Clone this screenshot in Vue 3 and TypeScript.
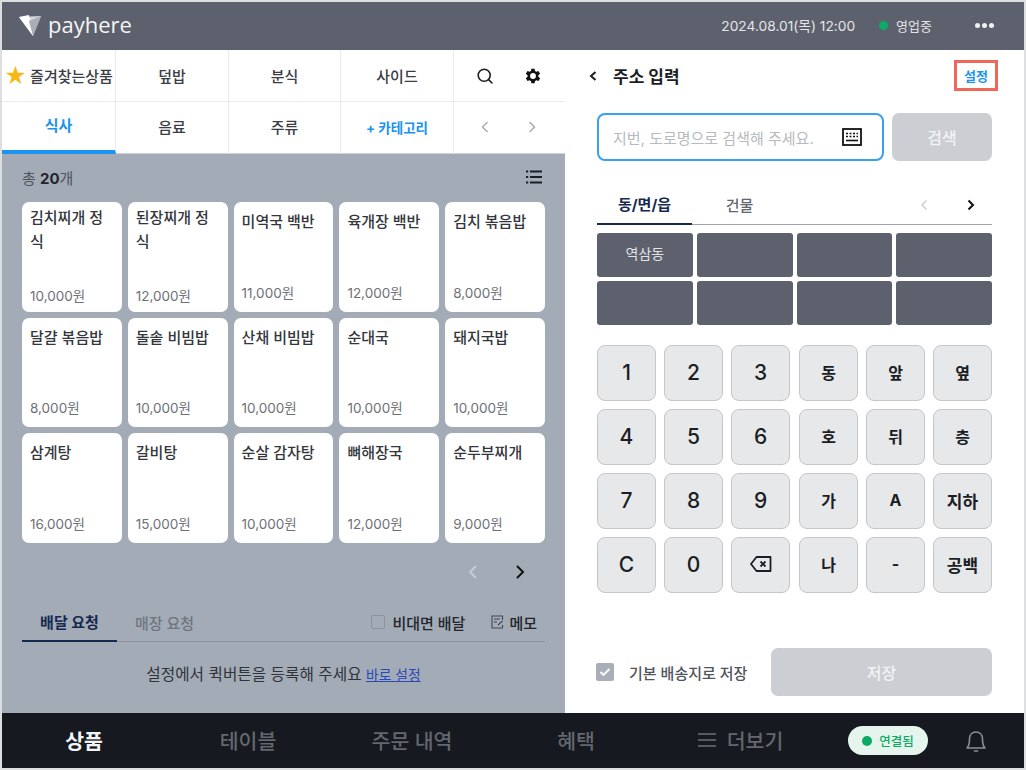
<template>
  <div class="frame">
    <header class="topbar">
      <div class="logo">
        <svg width="24" height="24" viewBox="0 0 24 24">
          <path d="M1 4 L23 3 L15 23 Z" fill="#d5d8dc" />
          <path d="M1 4 L11 2 L15 23 Z" fill="#ffffff" />
          <path d="M11 8 L23 3 L15 23 Z" fill="#a9adb4" />
        </svg>
        <span>payhere</span>
      </div>
      <div class="top-right">
        <span class="datetime">2024.08.01(목) 12:00</span>
        <span class="status"><i class="dot"></i>영업중</span>
        <span class="more"><i></i><i></i><i></i></span>
      </div>
    </header>

    <main class="body">
      <section class="left">
        <div class="cats">
          <div class="cat"><span class="star">★</span><span class="fav">즐겨찾는상품</span></div>
          <div class="cat">덮밥</div>
          <div class="cat">분식</div>
          <div class="cat">사이드</div>
          <div class="cat tools">
            <svg width="18" height="18" viewBox="0 0 18 18" fill="none" stroke="#1b1e24" stroke-width="1.6">
              <circle cx="8.2" cy="8.2" r="6" />
              <path d="M12.6 12.6 L16 16" stroke-linecap="round" />
            </svg>
            <svg width="20" height="20" viewBox="0 0 24 24" fill="#111">
              <path d="M19.4 13a7.5 7.5 0 0 0 0-2l2.1-1.6-2-3.5-2.5 1a7.6 7.6 0 0 0-1.7-1L15 3.2h-4l-.4 2.7a7.6 7.6 0 0 0-1.7 1l-2.500-1-2 3.500L6.500 11a7.500 7.500 0 0 0 0 2l-2.100 1.600 2 3.500 2.500-1a7.600 7.600 0 0 0 1.700 1l.4 2.700h4l.4-2.700a7.600 7.600 0 0 0 1.700-1l2.500 1 2-3.500zM13 15.500a3.500 3.500 0 1 1 0-7 3.500 3.500 0 0 1 0 7z" transform="translate(-1 0)" />
            </svg>
          </div>
          <div class="cat active">식사</div>
          <div class="cat">음료</div>
          <div class="cat">주류</div>
          <div class="cat add">+ 카테고리</div>
          <div class="cat tools arrows">
            <svg class="chev" width="10" height="14" viewBox="0 0 10 14" fill="none" stroke="#a9adb4" stroke-width="1.5"><path d="M7.500 2 L2.500 7 L7.500 12" /></svg>
            <svg class="chev" width="10" height="14" viewBox="0 0 10 14" fill="none" stroke="#a9adb4" stroke-width="1.5"><path d="M2.500 2 L7.500 7 L2.500 12" /></svg>
          </div>
        </div>

        <div class="products">
          <div class="total-row">
            <span class="total">총 <b>20</b>개</span>
            <svg width="16" height="14" viewBox="0 0 16 14" fill="#1b1e24">
              <rect x="0" y="0.500" width="2.200" height="2" /><rect x="4" y="0.500" width="12" height="2" />
              <rect x="0" y="6" width="2.200" height="2" /><rect x="4" y="6" width="12" height="2" />
              <rect x="0" y="11.500" width="2.200" height="2" /><rect x="4" y="11.500" width="12" height="2" />
            </svg>
          </div>
          <div class="cards">
            <div v-for="p in products" :key="p.name" class="card" :class="{ long: p.name.length > 6 }">
              <div class="name">{{ p.name }}</div>
              <div class="price">{{ p.price }}</div>
            </div>
          </div>
          <div class="pager">
            <svg width="12" height="18" viewBox="0 0 12 18" fill="none" stroke="#c6cbd2" stroke-width="2"><path d="M9 3 L3 9 L9 15" /></svg>
            <svg width="12" height="18" viewBox="0 0 12 18" fill="none" stroke="#111" stroke-width="2"><path d="M3 3 L9 9 L3 15" /></svg>
          </div>
          <div class="req-tabs">
            <span class="req-tab on">배달 요청</span>
            <span class="req-tab">매장 요청</span>
            <span class="req-right">
              <span class="opt"><i class="box"></i>비대면 배달</span>
              <span class="opt memo">
                <svg width="13" height="14" viewBox="0 0 13 14" fill="none" stroke="#444a55" stroke-width="1.100">
                  <path d="M11.500 5 V1 H1 V13 H11.500 V10" />
                  <path d="M3 4 H9 M3 7 H6" />
                  <path d="M7 10 L11.500 6" />
                </svg>
                메모
              </span>
            </span>
          </div>
          <div class="quick">설정에서 퀵버튼을 등록해 주세요 <a>바로 설정</a></div>
        </div>
      </section>

      <section class="right">
        <div class="addr-head">
          <div class="addr-title">
            <svg width="10" height="12" viewBox="0 0 10 12" fill="none" stroke="#1b1e24" stroke-width="2"><path d="M7.500 2 L3 6 L7.500 10" /></svg>
            <span>주소 입력</span>
          </div>
          <span class="setting">설정</span>
        </div>

        <div class="search-row">
          <div class="search-box">
            <span>지번, 도로명으로 검색해 주세요.</span>
            <svg width="20" height="18" viewBox="0 0 20 18" fill="none">
              <rect x="1" y="1" width="18" height="16" stroke="#111" stroke-width="1.800" />
              <path d="M4 5.500 H6 M7.500 5.500 H9.500 M11 5.500 H13 M14.500 5.500 H16 M4 8.500 H6 M7.500 8.500 H9.500 M11 8.500 H13 M14.500 8.500 H16" stroke="#111" stroke-width="1.600" />
              <path d="M4 12.500 H16" stroke="#111" stroke-width="1.600" />
            </svg>
          </div>
          <button class="btn-off search-btn">검색</button>
        </div>

        <div class="dong-tabs">
          <span class="dong-tab on">동/면/읍</span>
          <span class="dong-tab">건물</span>
          <span class="dong-nav">
            <svg width="10" height="12" viewBox="0 0 10 12" fill="none" stroke="#ccd0d5" stroke-width="1.500"><path d="M7.500 1.500 L3 6 L7.500 10.500" /></svg>
            <svg width="10" height="12" viewBox="0 0 10 12" fill="none" stroke="#111" stroke-width="2"><path d="M2.500 1.500 L7 6 L2.500 10.500" /></svg>
          </span>
        </div>

        <div class="dong-grid">
          <div v-for="(d, i) in dongs" :key="i" class="dong-cell">{{ d }}</div>
        </div>

        <div class="keypad">
          <div v-for="k in keys" :key="k.id" class="key" :class="{ ko: k.ko, text: k.label.length > 1 && k.id !== 'back' }">
            <svg v-if="k.id === 'back'" width="24" height="18" viewBox="0 0 24 18" fill="none" stroke="#1b1e24" stroke-width="1.800" stroke-linejoin="round">
              <path d="M7.500 2 H21.500 V16 H7.500 L2 9 Z" />
              <path d="M11.500 6.500 L16.500 11.500 M16.500 6.500 L11.500 11.500" />
            </svg>
            <template v-else>{{ k.label }}</template>
          </div>
        </div>

        <div class="save-row">
          <label class="save-check">
            <i class="checked">
              <svg width="12" height="10" viewBox="0 0 12 10" fill="none" stroke="#fff" stroke-width="1.800"><path d="M1.500 5 L4.500 8 L10.500 2" /></svg>
            </i>
            기본 배송지로 저장
          </label>
          <button class="btn-off save-btn">저장</button>
        </div>
      </section>
    </main>

    <nav class="bottom">
      <span class="nav-item on">상품</span>
      <span class="nav-item">테이블</span>
      <span class="nav-item">주문 내역</span>
      <span class="nav-item">혜택</span>
      <span class="nav-item more-item">
        <svg width="20" height="16" viewBox="0 0 20 16" fill="none" stroke="#6c7078" stroke-width="1.700"><path d="M1 2 H19 M1 8 H19 M1 14 H19" /></svg>
        더보기
      </span>
      <span class="conn"><i></i>연결됨</span>
      <svg class="bell" width="22" height="24" viewBox="0 0 22 24" fill="none" stroke="#8b8f96" stroke-width="1.600">
        <path d="M2 19 C4 17 4.500 15 4.500 10 C4.500 5.500 7.500 3 11 3 C14.500 3 17.500 5.500 17.500 10 C17.500 15 18 17 20 19 Z" stroke-linejoin="round" />
        <path d="M9.500 22 H12.500" stroke-linecap="round" />
      </svg>
    </nav>
  </div>
</template>

<script setup lang="ts">
interface Product {
  name: string;
  price: string;
}

interface Key {
  id: string;
  label: string;
  ko?: boolean;
}

const products: Product[] = [
  { name: '김치찌개 정식', price: '10,000원' },
  { name: '된장찌개 정식', price: '12,000원' },
  { name: '미역국 백반', price: '11,000원' },
  { name: '육개장 백반', price: '12,000원' },
  { name: '김치 볶음밥', price: '8,000원' },
  { name: '달걀 볶음밥', price: '8,000원' },
  { name: '돌솥 비빔밥', price: '10,000원' },
  { name: '산채 비빔밥', price: '10,000원' },
  { name: '순대국', price: '10,000원' },
  { name: '돼지국밥', price: '10,000원' },
  { name: '삼계탕', price: '16,000원' },
  { name: '갈비탕', price: '15,000원' },
  { name: '순살 감자탕', price: '10,000원' },
  { name: '뼈해장국', price: '12,000원' },
  { name: '순두부찌개', price: '9,000원' },
];

const dongs = ['역삼동', '', '', '', '', '', '', ''];

const rows = [
  ['1', '2', '3', '동', '앞', '옆'],
  ['4', '5', '6', '호', '뒤', '층'],
  ['7', '8', '9', '가', 'A', '지하'],
  ['C', '0', 'back', '나', '-', '공백'],
];

const keys: Key[] = rows.flatMap((row) =>
  row.map((label, i) => ({
    id: label,
    label,
    ko: i >= 3,
  })),
);
</script>

<style>
html,
body {
  margin: 0;
  background: #dcdee0;
}
</style>

<style scoped>
* {
  box-sizing: border-box;
}

.frame {
  width: 1026px;
  height: 770px;
  padding: 2px;
  display: flex;
  flex-direction: column;
  background: #dcdee0;
  font-family: Inter, 'Noto Sans CJK KR', sans-serif;
  color: #22252b;
  overflow: hidden;
}

.topbar {
  height: 48px;
  flex: none;
  background: #5c616d;
  display: flex;
  align-items: center;
  justify-content: space-between;
  padding: 0 30px 2px 16px;
  color: #e4e5e8;
}

.logo {
  display: flex;
  align-items: center;
  gap: 6px;
}

.logo span {
  font-family: 'Open Sans', sans-serif;
  font-size: 22px;
  font-weight: 500;
  color: #f4f5f6;
  line-height: 1;
  margin-top: -3px;
}

.top-right {
  display: flex;
  align-items: center;
  font-size: 13.750px;
}

.datetime {
  margin-right: 24px;
}

.status {
  display: flex;
  align-items: center;
  gap: 8px;
  font-size: 13px;
  margin-right: 43px;
}

.dot {
  width: 9px;
  height: 9px;
  border-radius: 50%;
  background: #0caa64;
}

.more {
  display: flex;
  gap: 2px;
}

.more i {
  width: 5px;
  height: 5px;
  border-radius: 50%;
  background: #f0f1f2;
}

.body {
  flex: 1;
  display: flex;
  min-height: 0;
}

.left {
  width: 563px;
  flex: none;
  display: flex;
  flex-direction: column;
  background: #a3abb6;
}

.cats {
  display: grid;
  grid-template-columns: 114px 113px 112px 113px 111px;
  grid-template-rows: 52px 52px;
  background: #fff;
  flex: none;
}

.cat {
  display: flex;
  align-items: center;
  justify-content: center;
  border-right: 1px solid #eaebed;
  border-bottom: 1px solid #eaebed;
  font-size: 15px;
  font-weight: 500;
  color: #3a3d44;
  white-space: nowrap;
}

.cat:nth-child(5n) {
  border-right: 0;
}

.cat:nth-child(n + 6) {
  border-bottom-color: #cfd3d8;
  padding-bottom: 2px;
}

.star {
  color: #f8b814;
  font-size: 22px;
  line-height: 1;
  margin-right: 3px;
}

.fav {
  font-size: 15px;
}

.tools {
  gap: 29px;
}

.tools .chev {
  margin: 0 4px;
}

.arrows {
  padding-right: 2px;
}

.cat.active {
  color: #1b93f0;
  font-weight: 700;
  border-bottom: 4px solid #1b93f0;
  padding-bottom: 4px;
}

.cat.add {
  color: #1b93f0;
  font-size: 13.500px;
  font-weight: 700;
}

.products {
  flex: 1;
  display: flex;
  flex-direction: column;
  padding: 0 20px;
  min-height: 0;
}

.total-row {
  height: 48px;
  flex: none;
  display: flex;
  align-items: center;
  justify-content: space-between;
  padding: 0 3px 2px 0;
  font-size: 15px;
  color: #4f545d;
}

.total b {
  color: #22252b;
  font-weight: 700;
}

.cards {
  display: grid;
  grid-template-columns: repeat(5, 99.800px);
  grid-auto-rows: 109.700px;
  gap: 6px;
  flex: none;
}

.card {
  background: #fff;
  border-radius: 7px;
  padding: 8px 8px 10px;
  display: flex;
  flex-direction: column;
  justify-content: space-between;
}

/* two line names sit a bit higher, price drops a bit */
.card.long {
  padding: 4px 8px 7px;
}

.name {
  font-size: 15px;
  font-weight: 500;
  line-height: 24px;
  color: #33363c;
}

.price {
  font-size: 13.500px;
  line-height: 18px;
  color: #6d7178;
}

.pager {
  display: flex;
  justify-content: flex-end;
  gap: 35px;
  padding: 20px 19px 0 0;
  height: 54px;
  flex: none;
}

.req-tabs {
  display: flex;
  align-items: center;
  height: 39px;
  margin-top: 6px;
  flex: none;
  border-bottom: 1px solid #8d939d;
  font-size: 15px;
  font-weight: 500;
}

.req-tab {
  width: 95px;
  height: 39px;
  display: flex;
  align-items: center;
  justify-content: center;
  color: #6f7680;
  margin-right: -7px;
}

.req-tab.on {
  color: #16284f;
  font-weight: 700;
  border-bottom: 2px solid #16284f;
  margin-right: 0;
}

.req-right {
  margin-left: auto;
  display: flex;
  align-items: center;
  gap: 26px;
  padding-right: 8px;
  color: #22252b;
}

.opt {
  display: flex;
  align-items: center;
  gap: 7px;
}

.memo {
  gap: 5px;
}

.box {
  width: 14px;
  height: 14px;
  border: 1.500px solid #8d939d;
  border-radius: 2px;
}

.quick {
  text-align: center;
  font-size: 15.700px;
  margin-top: 20px;
  color: #30333a;
}

.quick a {
  color: #2b48b8;
  text-decoration: underline;
  font-size: 13.800px;
}

.right {
  flex: 1;
  background: #fff;
  padding: 0 32px;
  display: flex;
  flex-direction: column;
}

.addr-head {
  height: 63px;
  flex: none;
  display: flex;
  align-items: center;
  justify-content: space-between;
  padding-bottom: 12px;
  margin-right: -6px;
}

.addr-title {
  display: flex;
  align-items: center;
  gap: 15px;
  margin-left: -9px;
  font-size: 17px;
  font-weight: 700;
  color: #1b1e24;
}

.setting {
  width: 44px;
  height: 31px;
  border: 3px solid #f0685a;
  display: flex;
  align-items: center;
  justify-content: center;
  font-size: 13px;
  font-weight: 700;
  color: #1b93f0;
}

.search-row {
  display: flex;
  gap: 8px;
  flex: none;
}

.search-box {
  width: 287px;
  height: 48px;
  border: 2px solid #3aa1ee;
  border-radius: 8px;
  display: flex;
  align-items: center;
  justify-content: space-between;
  padding: 0 20px 0 14px;
  font-size: 15px;
  color: #b6bac0;
}

.btn-off {
  border: 0;
  border-radius: 7px;
  background: #ccced3;
  color: #f2f3f4;
  font-family: inherit;
  font-size: 16px;
  font-weight: 500;
}

.search-btn {
  width: 100px;
  height: 48px;
}

.dong-tabs {
  margin-top: 29px;
  height: 35px;
  flex: none;
  display: flex;
  align-items: center;
  border-bottom: 1px solid #a0a4aa;
  font-size: 15px;
  font-weight: 500;
  color: #62666d;
}

.dong-tab {
  width: 95px;
  height: 35px;
  display: flex;
  align-items: center;
  justify-content: center;
  padding-bottom: 5px;
}

.dong-tab.on {
  color: #16284f;
  font-weight: 700;
  border-bottom: 2px solid #16284f;
}

.dong-nav {
  margin-left: auto;
  display: flex;
  gap: 37px;
  padding: 0 16px 4px 0;
}

.dong-grid {
  margin-top: 8px;
  display: grid;
  grid-template-columns: repeat(4, 95.750px);
  grid-auto-rows: 44px;
  gap: 4px;
  flex: none;
}

.dong-cell {
  background: #5c616d;
  border-radius: 3px;
  color: #e1e3e6;
  font-size: 14px;
  display: flex;
  align-items: center;
  justify-content: center;
  padding-bottom: 4px;
}

.keypad {
  margin-top: 20px;
  display: grid;
  grid-template-columns: repeat(6, 59px);
  grid-auto-rows: 56px;
  gap: 8px;
  flex: none;
}

.key {
  background: #e7e8ea;
  border: 1px solid #c3c6ca;
  border-radius: 8px;
  display: flex;
  align-items: center;
  justify-content: center;
  font-size: 21px;
  font-weight: 500;
  color: #1b1e24;
  padding-bottom: 2px;
}

.key.ko {
  font-size: 16px;
  font-weight: 700;
  transform: translateX(1px);
}

.key.text {
  font-size: 17px;
}

.save-row {
  margin-top: auto;
  margin-bottom: 17px;
  display: flex;
  align-items: center;
  justify-content: space-between;
}

.save-check {
  display: flex;
  align-items: center;
  gap: 15px;
  margin-left: -1px;
  font-size: 15px;
  font-weight: 500;
  color: #50545c;
}

.checked {
  width: 18px;
  height: 18px;
  background: #a9aeb9;
  border-radius: 2px;
  display: flex;
  align-items: center;
  justify-content: center;
}

.save-btn {
  width: 221px;
  height: 48px;
}

.bottom {
  height: 55px;
  flex: none;
  background: #16191f;
  display: flex;
  align-items: center;
}

.nav-item {
  width: 164px;
  text-align: center;
  font-size: 20.500px;
  font-weight: 500;
  color: #63676e;
  display: flex;
  align-items: center;
  justify-content: center;
  gap: 10px;
  padding-bottom: 2px;
}

.nav-item.on {
  color: #f3f4f5;
  font-weight: 700;
}

.conn {
  margin-left: 26px;
  width: 80px;
  height: 29px;
  border-radius: 15px;
  background: #e5f4ec;
  color: #0caa64;
  font-size: 12.500px;
  font-weight: 500;
  display: flex;
  align-items: center;
  justify-content: center;
  gap: 7px;
}

.conn i {
  width: 10px;
  height: 10px;
  border-radius: 50%;
  background: #0caa64;
}

.bell {
  margin-left: 37px;
}
</style>
